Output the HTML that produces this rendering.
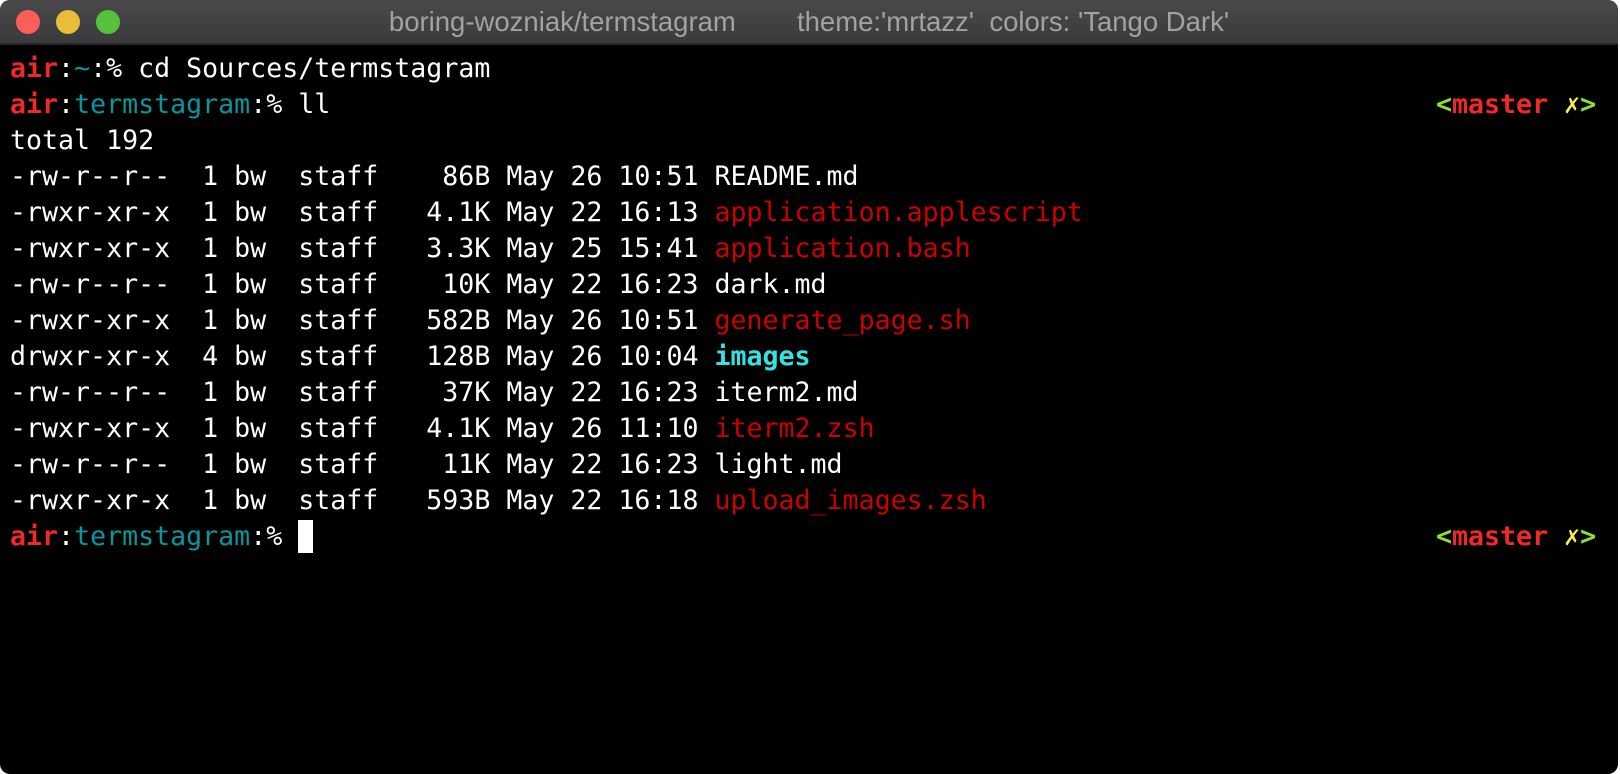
<!DOCTYPE html>
<html><head><meta charset="utf-8"><style>
html,body{margin:0;padding:0;width:1620px;height:774px;background:#fff;overflow:hidden}
.win{position:absolute;left:0;top:0;width:1618px;height:774px;background:#000;border-radius:10px;overflow:hidden}
.tb{position:absolute;left:0;top:0;width:100%;height:43px;background:linear-gradient(#4a4a4c,#3a3a3c);border-bottom:2px solid #262626}
.b{position:absolute;top:10px;width:24px;height:24px;border-radius:50%}
.title{position:absolute;left:0;right:0;top:6px;text-align:center;font:27.5px "Liberation Sans",sans-serif;line-height:32px;color:#a2a2a2;white-space:pre}
.term{position:absolute;left:10px;top:51px;font-family:"DejaVu Sans Mono",monospace;font-size:26.6px;line-height:36px;color:#fff;white-space:pre}
.r{position:absolute;left:1436px;font-family:"DejaVu Sans Mono",monospace;font-size:26.6px;line-height:36px;white-space:pre;font-weight:bold}
.R{color:#ef2929;font-weight:bold}.c{color:#06989a}.f{color:#cc0000}.i{color:#34e2e2;font-weight:bold}
.g{color:#8ae234}.y{color:#fce94f}
.cur{display:inline-block;width:15px;height:33px;background:#fff;vertical-align:-8px}
</style></head><body>
<div class="win">
<div class="tb">
<div class="b" style="left:16px;background:#fc5f57"></div>
<div class="b" style="left:56px;background:#e8bd3a"></div>
<div class="b" style="left:96px;background:#56c13c"></div>
<div class="title">boring-wozniak/termstagram        theme:'mrtazz'  colors: 'Tango Dark'</div>
</div>
<div class="term"><span class="R">air</span>:<span class="c">~</span>:% cd Sources/termstagram
<span class="R">air</span>:<span class="c">termstagram</span>:% ll
total 192
-rw-r--r--  1 bw  staff    86B May 26 10:51 README.md
-rwxr-xr-x  1 bw  staff   4.1K May 22 16:13 <span class="f">application.applescript</span>
-rwxr-xr-x  1 bw  staff   3.3K May 25 15:41 <span class="f">application.bash</span>
-rw-r--r--  1 bw  staff    10K May 22 16:23 dark.md
-rwxr-xr-x  1 bw  staff   582B May 26 10:51 <span class="f">generate_page.sh</span>
drwxr-xr-x  4 bw  staff   128B May 26 10:04 <span class="i">images</span>
-rw-r--r--  1 bw  staff    37K May 22 16:23 iterm2.md
-rwxr-xr-x  1 bw  staff   4.1K May 26 11:10 <span class="f">iterm2.zsh</span>
-rw-r--r--  1 bw  staff    11K May 22 16:23 light.md
-rwxr-xr-x  1 bw  staff   593B May 22 16:18 <span class="f">upload_images.zsh</span>
<span class="R">air</span>:<span class="c">termstagram</span>:% <span class="cur"></span></div>
<div class="r" style="top:87px"><span class="g">&lt;</span><span class="R">master</span> <span class="y">✗</span><span class="g">&gt;</span></div>
<div class="r" style="top:519px"><span class="g">&lt;</span><span class="R">master</span> <span class="y">✗</span><span class="g">&gt;</span></div>
</div>
</body></html>
